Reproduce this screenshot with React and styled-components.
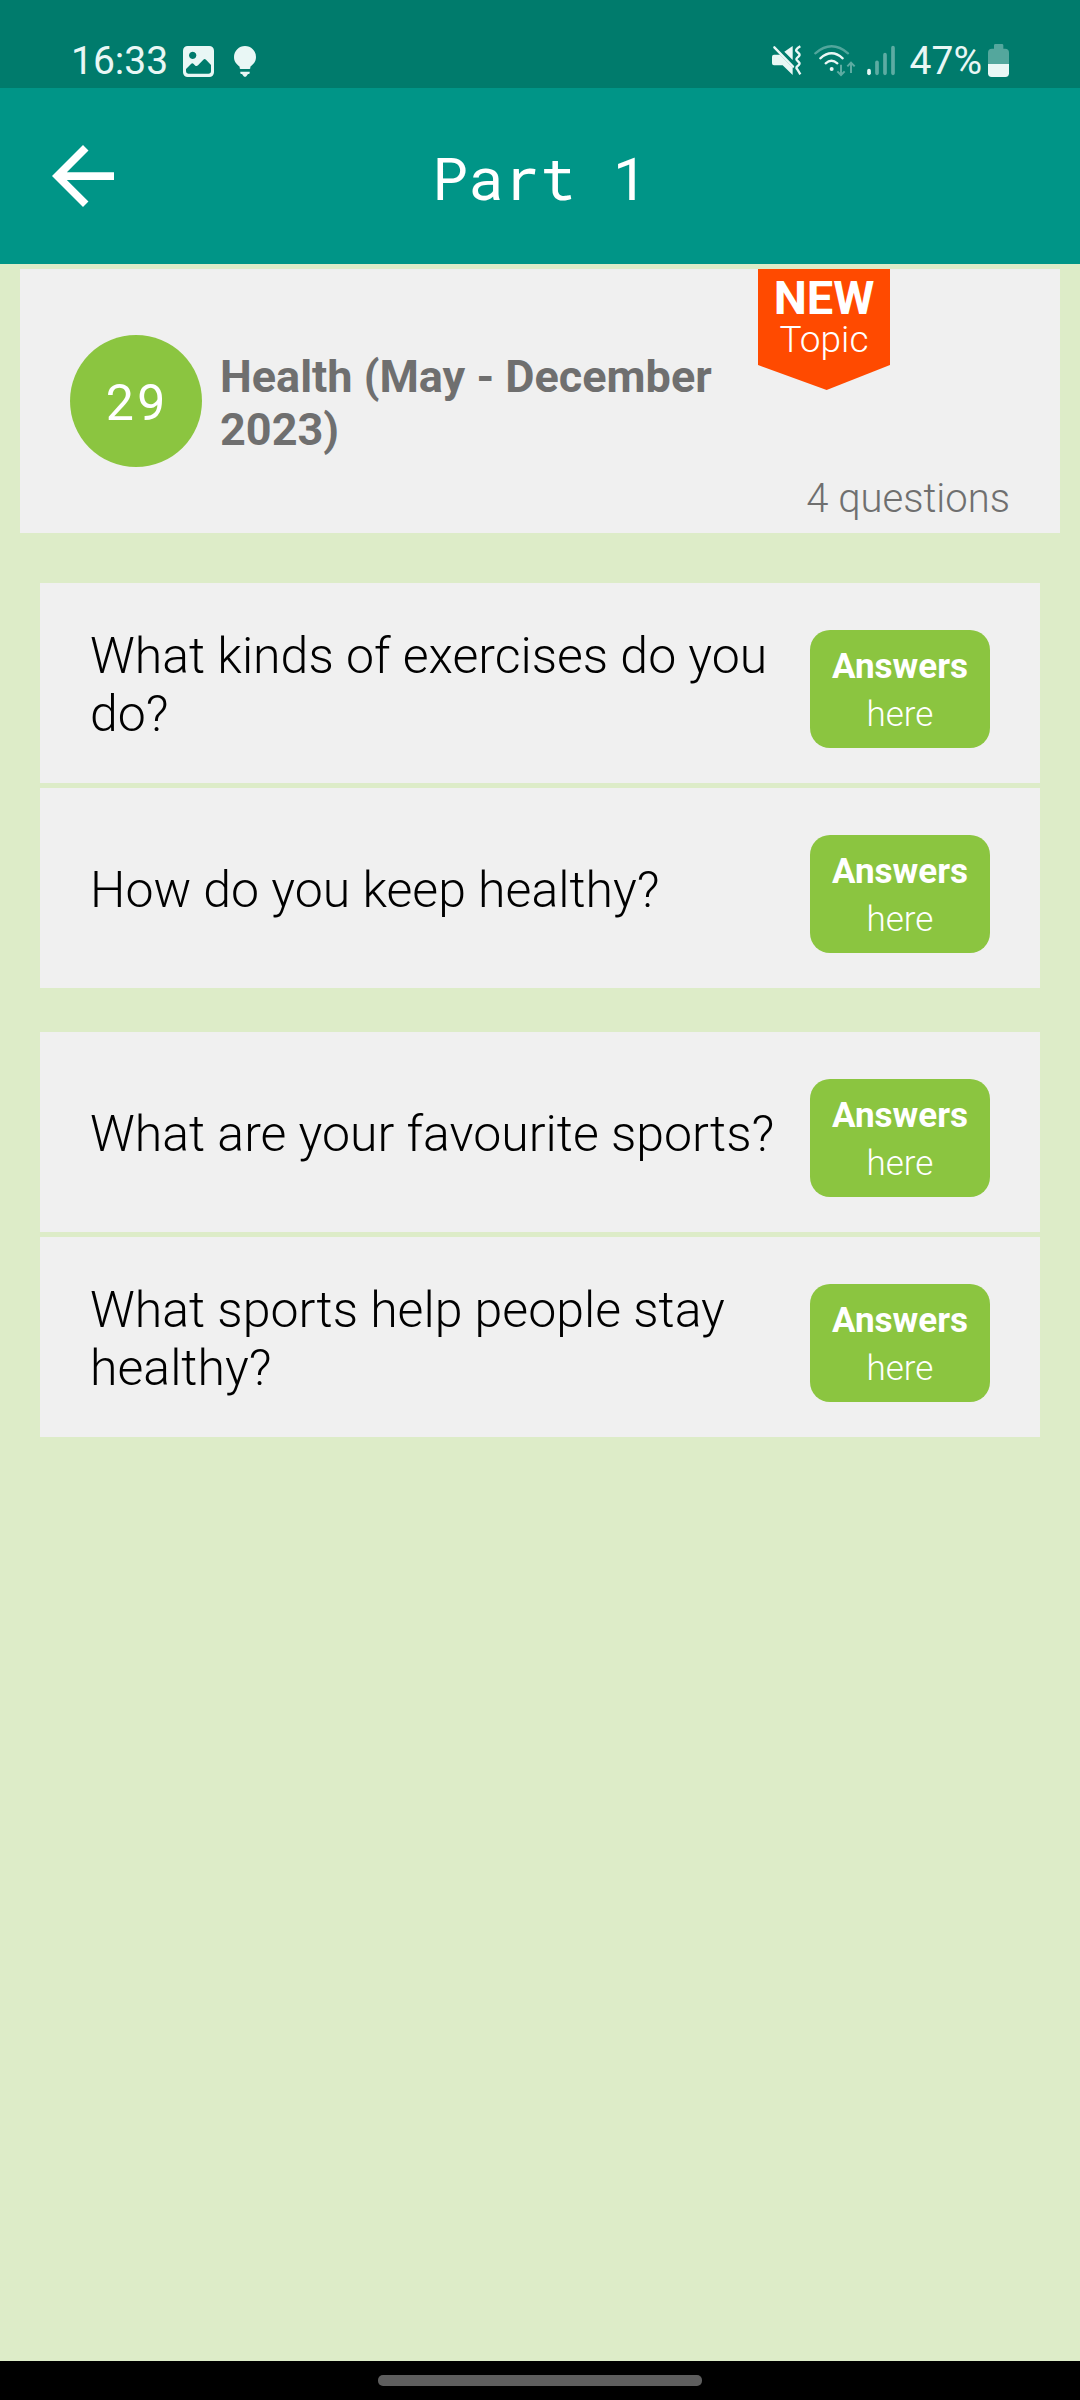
import React from "react";
import styled, { createGlobalStyle } from "styled-components";

const GlobalStyle = createGlobalStyle`
  *, *::before, *::after { box-sizing: border-box; }
  body { margin: 0; background: #ddecc8; font-family: Roboto, "Liberation Sans", sans-serif; }
  h1, h2, p, ul { margin: 0; padding: 0; }
  ul { list-style: none; }
  svg { display: block; flex: none; }
`;

const Screen = styled.div`
  min-height: 100vh;
  display: flex;
  flex-direction: column;
`;

const StatusBar = styled.div`
  height: 88px;
  padding: 0 71px 10px;
  display: flex;
  align-items: flex-end;
  justify-content: space-between;
  background: #007b6c;
  color: #e9f7f5;
  font-size: 39px;
  line-height: 34px;
`;

const StatusGroup = styled.div`
  display: flex;
  align-items: center;
  gap: ${(p) => p.$gap}px;
`;

const AppBar = styled.header`
  height: 176px;
  padding: 0 52px;
  display: grid;
  grid-template-columns: 62px 1fr 62px;
  align-items: center;
  background: #009587;
  color: #fff;
`;

const BackButton = styled.button`
  padding: 0;
  border: 0;
  background: none;
  color: inherit;
  cursor: pointer;
`;

const AppTitle = styled.h1`
  padding-top: 2px;
  font: 400 60px/80px "Roboto Mono", "DejaVu Sans Mono", monospace;
  text-align: center;
`;

const Content = styled.main`
  flex: 1;
  padding: 5px 20px 50px;
`;

const TopicCard = styled.section`
  display: grid;
  grid-template-columns: 132px 1fr 132px 120px;
  grid-template-rows: 66px auto 66px;
  padding: 0 50px;
  background: #f0f0f0;
  color: #6f6f6f;
`;

const TopicNumber = styled.div`
  grid-area: 2 / 1;
  width: 132px;
  height: 132px;
  border-radius: 50%;
  display: flex;
  align-items: center;
  justify-content: center;
  background: #8bc540;
  color: #fff;
  font: 400 50px/60px "Roboto Mono", Roboto, sans-serif;
`;

const TopicTitle = styled.h2`
  grid-area: 2 / 2;
  align-self: center;
  padding: 4px 18px 0;
  font-size: 45px;
  line-height: 53px;
  font-weight: 700;
`;

const Ribbon = styled.div`
  grid-area: 1 / 3 / 3 / 4;
  height: 121px;
  padding-top: 6px;
  background: #ff4a00;
  clip-path: polygon(0 0, 100% 0, 100% 96px, 52% 100%, 0 96px);
  color: #fff;
  text-align: center;
`;

const RibbonStrong = styled.strong`
  display: block;
  font-size: 47px;
  line-height: 46px;
  font-weight: 700;
`;

const RibbonLabel = styled.span`
  display: block;
  font-size: 37px;
  line-height: 38px;
  font-weight: 300;
`;

const QuestionCount = styled.p`
  grid-area: 3 / 3 / 4 / 5;
  align-self: end;
  justify-self: end;
  padding-bottom: 11px;
  font-size: 40px;
  line-height: 47px;
  font-weight: 300;
`;

const Groups = styled.div`
  display: flex;
  flex-direction: column;
  gap: 44px;
  padding: 50px 20px 0;
`;

const QuestionGroup = styled.ul`
  display: flex;
  flex-direction: column;
  gap: 5px;
`;

const QuestionRow = styled.li`
  min-height: 200px;
  padding: 4px 50px 0;
  display: flex;
  align-items: center;
  gap: 30px;
  background: #f0f0f0;
`;

const QuestionText = styled.p`
  flex: 1;
  color: #000;
  font-size: 50px;
  line-height: 58px;
  font-weight: 300;
`;

const AnswersButton = styled.button`
  flex: none;
  width: 180px;
  margin-top: 8px;
  padding: 13px 0 9px;
  border: 0;
  border-radius: 20px;
  background: #8bc540;
  color: #fff;
  font-family: inherit;
  font-size: 35px;
  line-height: 48px;
  font-weight: 300;
  cursor: pointer;

  strong, span { display: block; }
  strong { font-weight: 700; }
`;

const NavBar = styled.footer`
  height: 39px;
  padding-top: 14px;
  display: flex;
  justify-content: center;
  align-items: flex-start;
  background: #000;
`;

const HomePill = styled.div`
  width: 30%;
  height: 11px;
  border-radius: 5px;
  background: #5e5e5e;
`;

const ImageIcon = () => (
  <svg width="31" height="34" viewBox="432 132 93 102" aria-hidden="true">
    <path
      fill="currentColor"
      fillRule="evenodd"
      d="M446 138h65a14 14 0 0 1 14 14v65a14 14 0 0 1-14 14h-65a14 14 0 0 1-14-14v-65a14 14 0 0 1 14-14z M461 155a11 11 0 1 0 0.1 0z M441 207v7q0 7 7 7h60q8 0 8-8v-18l-15-16q-4-4-8 0l-16 17q-4 4-8 1l-5-5q-4-4-8 0z"
    />
  </svg>
);

const BulbIcon = () => (
  <svg width="22" height="34" viewBox="586 132 66 102" fill="currentColor" aria-hidden="true">
    <path d="M619 138a33 33 0 0 1 33 33c0 14-8 22-17 29v4q0 3-3 3h-26q-3 0-3-3v-4c-9-7-17-15-17-29a33 33 0 0 1 33-33z" />
    <path d="M605 215h28v4q0 3-3 3h-2l-5 7q-4 3-8 0l-5-7h-2q-3 0-3-3z" />
  </svg>
);

const MutedIcon = () => (
  <svg width="30" height="34" viewBox="99 132 90 102" fill="currentColor" aria-hidden="true">
    <path d="M105 164h18l38 39v22l-30-29h-26q-6 0-6-6v-20q0-6 6-6z" />
    <path d="M161 138v42l-25-25z" />
    <path d="M106 142l56 58" stroke="currentColor" strokeWidth="7" strokeLinecap="round" />
    <path d="M184 139q-18 10-10 16l6 6q4 4-1 8l-5 5q-4 4 1 8l5 5q4 4-1 8l-5 5q-4 4 1 8q4 6 9 15" fill="none" stroke="currentColor" strokeWidth="7" />
  </svg>
);

const WifiIcon = () => (
  <svg width="43" height="34" viewBox="226 132 129 102" fill="none" stroke="currentColor" aria-hidden="true">
    <g strokeWidth="7" strokeLinecap="round">
      <path d="M233 160q49-42 98 0" opacity="0.35" />
      <path d="M248 175q34-30 67 0M264 190q17-15 35 0" />
    </g>
    <circle cx="282" cy="207" r="6" fill="currentColor" stroke="none" />
    <path d="M310 194v30M299 214l11 11 11-11M340 219v-30M329 199l11-11 11 11" strokeWidth="6" opacity="0.4" />
  </svg>
);

const SignalIcon = () => (
  <svg width="28" height="34" viewBox="381 132 84 102" stroke="currentColor" strokeWidth="11" strokeLinecap="round" aria-hidden="true">
    <path d="M387 212v8" />
    <path d="M411 187v33M435 164v56M459 143v77" opacity="0.4" />
  </svg>
);

const BatteryIcon = () => (
  <svg width="21" height="34" viewBox="744 132 63 102" fill="currentColor" aria-hidden="true">
    <path opacity="0.36" d="M766 132h20q4 0 4 4v10h5q12 0 12 12v34h-63v-34q0-12 12-12h6v-10q0-4 4-4z" />
    <path d="M744 192h63v28q0 11-11 11h-41q-11 0-11-11z" />
  </svg>
);

const BackIcon = () => (
  <svg width="62" height="62" viewBox="4 4 16 16" fill="currentColor" aria-hidden="true">
    <path d="M20 11H7.83l5.59-5.59L12 4l-8 8 8 8 1.41-1.41L7.83 13H20v-2z" />
  </svg>
);

const questionGroups = [
  ["What kinds of exercises do you do?", "How do you keep healthy?"],
  ["What are your favourite sports?", "What sports help people stay healthy?"],
];

function Question({ text }) {
  return (
    <QuestionRow>
      <QuestionText>{text}</QuestionText>
      <AnswersButton type="button">
        <strong>Answers</strong>
        <span>here</span>
      </AnswersButton>
    </QuestionRow>
  );
}

export default function App() {
  return (
    <Screen>
      <GlobalStyle />
      <StatusBar>
        <StatusGroup $gap={15}>
          <span>16:33</span>
          <StatusGroup $gap={20}>
            <ImageIcon />
            <BulbIcon />
          </StatusGroup>
        </StatusGroup>
        <StatusGroup $gap={15}>
          <StatusGroup $gap={11}>
            <MutedIcon />
            <WifiIcon />
            <SignalIcon />
          </StatusGroup>
          <StatusGroup $gap={6}>
            <span>47%</span>
            <BatteryIcon />
          </StatusGroup>
        </StatusGroup>
      </StatusBar>
      <AppBar>
        <BackButton type="button" aria-label="Back">
          <BackIcon />
        </BackButton>
        <AppTitle>Part 1</AppTitle>
      </AppBar>
      <Content>
        <TopicCard>
          <TopicNumber>29</TopicNumber>
          <TopicTitle>Health (May - December 2023)</TopicTitle>
          <Ribbon>
            <RibbonStrong>NEW</RibbonStrong>
            <RibbonLabel>Topic</RibbonLabel>
          </Ribbon>
          <QuestionCount>4 questions</QuestionCount>
        </TopicCard>
        <Groups>
          {questionGroups.map((group, i) => (
            <QuestionGroup key={i}>
              {group.map((text) => (
                <Question key={text} text={text} />
              ))}
            </QuestionGroup>
          ))}
        </Groups>
      </Content>
      <NavBar>
        <HomePill />
      </NavBar>
    </Screen>
  );
}
